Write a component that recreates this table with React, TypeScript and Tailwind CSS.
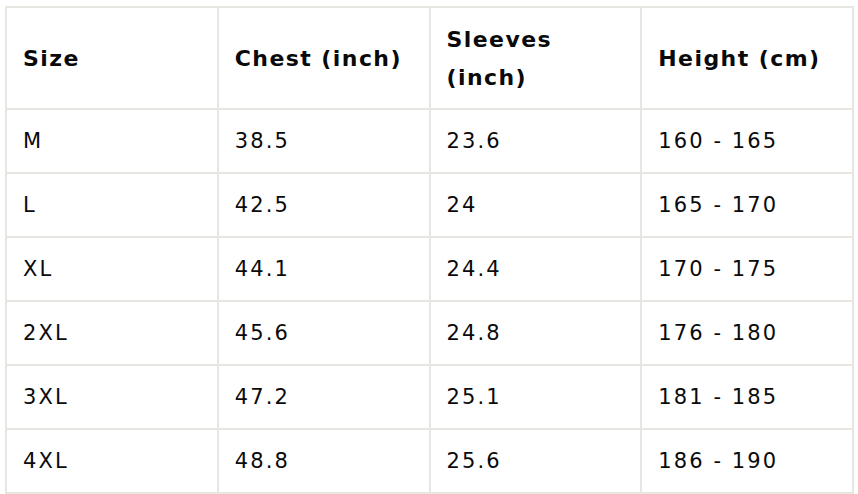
const rows = [
  ["M", "38.5", "23.6", "160 - 165"],
  ["L", "42.5", "24", "165 - 170"],
  ["XL", "44.1", "24.4", "170 - 175"],
  ["2XL", "45.6", "24.8", "176 - 180"],
  ["3XL", "47.2", "25.1", "181 - 185"],
  ["4XL", "48.8", "25.6", "186 - 190"],
];

export default function App() {
  return (
    <div
      className="w-[858px] h-[494px] bg-white pt-[6px] pl-[5px]"
      style={{ fontFamily: '"DejaVu Sans", sans-serif' }}
    >
      <table className="w-[849px] border-collapse table-fixed text-[#0a0a0a]">
        <thead>
          <tr className="h-[102px]">
            {["Size", "Chest (inch)", "Sleeves (inch)", "Height (cm)"].map((h) => (
              <th
                key={h}
                className="border-2 border-[#e8e6e0] pl-[16px] pr-[6px] pt-[2px] text-left align-middle text-[22px] leading-[38px] font-bold tracking-[0.065em]"
              >
                {h}
              </th>
            ))}
          </tr>
        </thead>
        <tbody>
          {rows.map((r) => (
            <tr key={r[0]} className="h-[64px]">
              {r.map((c, i) => (
                <td
                  key={i}
                  className="border-2 border-[#e8e6e0] px-[16px] pt-[2px] align-middle text-[21px] tracking-[0.1em]"
                >
                  {c}
                </td>
              ))}
            </tr>
          ))}
        </tbody>
      </table>
    </div>
  );
}
